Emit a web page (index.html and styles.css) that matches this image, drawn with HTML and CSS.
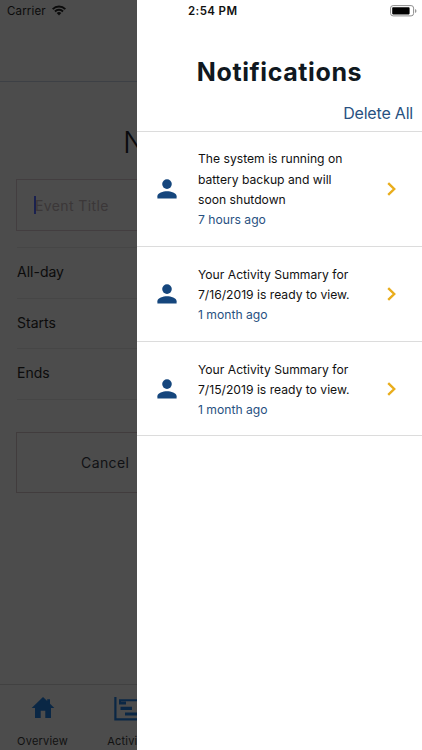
FILE: index.html
```html
<!DOCTYPE html>
<html lang="en">
<head>
<meta charset="utf-8">
<title>Notifications</title>
<link rel="stylesheet" href="styles.css">
</head>
<body>
<div class="screen">
  <div class="page">
    <div class="status">
      <span>Carrier</span>
      <svg class="wifi" viewBox="0 0 14 11" width="14" height="11"><g fill="none" stroke="#0b0b0b" stroke-width="2"><path d="M.7 4.1a9 9 0 0 1 12.6 0"/><path d="M3 6.5a5.7 5.7 0 0 1 8 0"/></g><path d="M4.7 8.1a3.3 3.3 0 0 1 4.6 0L7 10.5z" fill="#0b0b0b"/></svg>
    </div>
    <div class="heading">New Event</div>
    <div class="event-title"><span class="caret"></span><span>Event Title</span></div>
    <div class="fields">
      <div class="field">All-day</div>
      <div class="field">Starts</div>
      <div class="field">Ends</div>
    </div>
    <div class="cancel">Cancel</div>
    <div class="tabs">
      <div class="tab">
        <svg viewBox="0 0 24 22" width="24" height="22"><path d="M12 1 .7 12H4v10h5.7v-7.3h4.6V22H20V12h3.3L19 7.8V3.3h-2.8v1.8z" fill="#0a2745"/></svg>
        <span>Overview</span>
      </div>
      <div class="tab">
        <svg viewBox="0 0 30 26" width="30" height="26"><g fill="none" stroke="#0a2745"><path d="M2.4 1v22.4H29" stroke-width="2.2"/><path d="M7 8V4.3h19V9" stroke-width="2"/><path d="M6 7h7M7.5 12.3h11.5M12 18H26" stroke-width="3.2"/></g></svg>
        <span>Activity</span>
      </div>
    </div>
  </div>
  <main class="drawer">
    <div class="clock-row">
      <span class="clock">2:54 PM</span>
      <svg viewBox="0 0 27 12" width="27" height="12"><rect x=".6" y=".6" width="23" height="10.3" rx="2.5" fill="#fff" stroke="#8d8d8d"/><rect x="2.2" y="2.2" width="17.4" height="7.2" rx=".8"/><path d="M25 4v4q1.5-.7 1.5-2T25 4" fill="#999"/></svg>
    </div>
    <h1>Notifications</h1>
    <div class="delete">Delete All</div>
    <div class="list">
      <div class="item first">
        <svg class="person" viewBox="0 0 20 20" width="20" height="20"><circle cx="10" cy="5.1" r="4.8" fill="#15467d"/><path d="M.4 19.6v-2.4c0-3.2 5.8-5 9.6-5s9.6 1.8 9.6 5v2.4z" fill="#15467d"/></svg>
        <div class="message"><div>The system is running on</div><div>battery backup and will</div><div>soon shutdown</div><div class="ago">7 hours ago</div></div>
        <svg class="chevron" viewBox="0 0 10 14" width="10" height="14"><path d="m1.2 1.2 6 5.8-6 5.8" fill="none" stroke="#e9ad1c" stroke-width="2.4"/></svg>
      </div>
      <div class="item">
        <svg class="person" viewBox="0 0 20 20" width="20" height="20"><circle cx="10" cy="5.1" r="4.8" fill="#15467d"/><path d="M.4 19.6v-2.4c0-3.2 5.8-5 9.6-5s9.6 1.8 9.6 5v2.4z" fill="#15467d"/></svg>
        <div class="message"><div>Your Activity Summary for</div><div>7/16/2019 is ready to view.</div><div class="ago">1 month ago</div></div>
        <svg class="chevron" viewBox="0 0 10 14" width="10" height="14"><path d="m1.2 1.2 6 5.8-6 5.8" fill="none" stroke="#e9ad1c" stroke-width="2.4"/></svg>
      </div>
      <div class="item">
        <svg class="person" viewBox="0 0 20 20" width="20" height="20"><circle cx="10" cy="5.1" r="4.8" fill="#15467d"/><path d="M.4 19.6v-2.4c0-3.2 5.8-5 9.6-5s9.6 1.8 9.6 5v2.4z" fill="#15467d"/></svg>
        <div class="message"><div>Your Activity Summary for</div><div>7/15/2019 is ready to view.</div><div class="ago">1 month ago</div></div>
        <svg class="chevron" viewBox="0 0 10 14" width="10" height="14"><path d="m1.2 1.2 6 5.8-6 5.8" fill="none" stroke="#e9ad1c" stroke-width="2.4"/></svg>
      </div>
    </div>
  </main>
</div>
</body>
</html>
```
FILE: styles.css
```css
* { box-sizing: border-box; }
body { margin: 0; font-family: Inter, "Liberation Sans", sans-serif; color: #111; }
svg { display: block; flex: none; }
.screen { display: flex; width: 422px; height: 750px; overflow: hidden; }

.page { width: 137px; flex: none; display: flex; flex-direction: column; overflow: hidden; background: #4c4c4c; white-space: nowrap; color: #0b0b0b; }
.status { height: 82px; flex: none; display: flex; align-items: flex-start; gap: 6px; padding: 4px 0 0 7px; border-bottom: 1px solid #3d4045; font-size: 11.5px; line-height: 14px; letter-spacing: .15px; }
.wifi { margin-top: 1px; }
.heading { height: 97px; flex: none; padding: 40px 0 0 123px; font-size: 30px; line-height: 40px; font-weight: 300; color: #090a0d; }
.event-title { height: 52px; flex: none; margin-left: 16px; border: 1px solid #433e40; border-right: 0; display: flex; align-items: center; padding-left: 17px; font-size: 14px; letter-spacing: .4px; color: #3b3738; }
.caret { width: 2px; height: 18px; background: #1a2150; margin-right: -1px; }
.fields { margin: 16px 0 0 17px; border-top: 1px solid #464646; flex: none; }
.field { height: 50.7px; border-bottom: 1px solid #464646; line-height: 48px; font-size: 14px; }
.cancel { height: 61px; flex: none; margin: 32px 0 0 16px; border: 1px solid #413c3d; border-right: 0; padding-left: 64px; line-height: 59px; font-size: 14px; letter-spacing: .4px; color: #101114; }
.tabs { margin-top: auto; height: 66px; flex: none; display: flex; border-top: 1px solid #414141; }
.tab { width: 85px; flex: none; display: flex; flex-direction: column; align-items: center; justify-content: space-between; padding: 11px 0 2px; font-size: 11px; line-height: 14px; letter-spacing: .2px; color: #111; }

.drawer { flex: 1; background: #fff; }
.clock-row { display: flex; justify-content: space-between; padding: 5px 5px 0 51px; height: 54px; }
.clock { font-size: 11.5px; line-height: 13px; font-weight: 600; letter-spacing: .4px; }
h1 { margin: 0; text-align: center; font-size: 25px; line-height: 37px; font-weight: 700; letter-spacing: .6px; color: #101820; }
.delete { height: 40px; padding: 12px 9px 0 0; text-align: right; font-size: 16px; line-height: 21px; letter-spacing: -.2px; color: #285181; }
.list { border-top: 1px solid #dcdcdc; }
.item { display: grid; grid-template-columns: 20px 1fr 10px; align-items: center; column-gap: 21px; height: 94.7px; padding: 1px 25px 0 20px; border-bottom: 1px solid #dcdcdc; }
.item.first { height: 115px; padding-top: 0; }
.message { padding-top: 2px; font-size: 12.15px; line-height: 20.3px; white-space: nowrap; }
.ago { color: #285181; }
```
